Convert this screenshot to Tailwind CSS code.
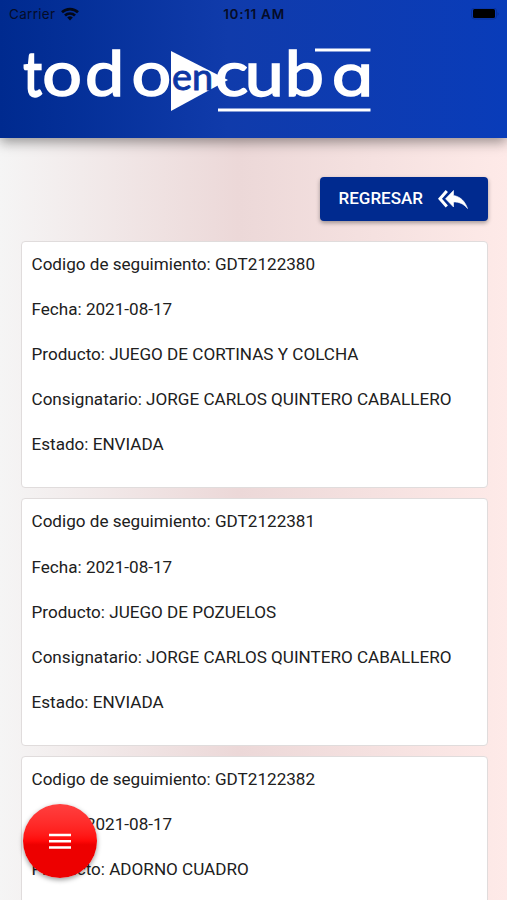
<!DOCTYPE html>
<html lang="es">
<head>
  <meta charset="UTF-8" />
  <meta name="viewport" content="width=device-width, initial-scale=1.0" />
  <title>Todo en Cuba</title>
  <script src="https://cdn.jsdelivr.net/npm/@tailwindcss/browser@4"></script>
</head>
<body class="h-[900px] overflow-hidden font-['Roboto',sans-serif] text-[17.1px] text-[#202020]">
  <div class="relative h-[900px] overflow-hidden bg-linear-to-r from-[#f5f5f5] via-[#ecd8d8] via-47% to-[#feeae8]">

    <header class="relative h-[137.5px] bg-linear-to-r from-[#002a8f] via-[#103bab] via-45% to-[#093cb9] shadow-[0_4px_12px_rgba(0,0,0,0.4)]">
      <!-- Status bar -->
      <div class="grid h-7 grid-cols-3 items-center pr-2 pl-[9px] font-['Inter',sans-serif] text-[13.5px] text-[#050c28]">
        <div class="flex items-center gap-1.5">
          <span class="tracking-[0.3px]">Carrier</span>
          <svg class="h-[14px] w-[18px]" viewBox="0 0 18 14" fill="none" stroke="#030818" stroke-width="2.7">
            <path d="M1 5.3a11.5 11.5 0 0 1 16 0" />
            <path d="M4 8.5a7.2 7.2 0 0 1 10 0" />
            <path d="M6.2 10.6a4 4 0 0 1 5.6 0L9 13.6z" fill="#030818" stroke="none" />
          </svg>
        </div>
        <span class="text-center font-semibold tracking-[0.7px]">10:11 AM</span>
        <svg class="h-3 w-7 justify-self-end" viewBox="0 0 28 12">
          <rect x="0.5" y="0" width="25" height="11" rx="3" fill="none" stroke="#08309a" />
          <rect x="2" y="1" width="22" height="9" rx="1.5" fill="#000" />
          <path d="M26.5 4v4l1.5-2z" fill="#08309a" />
        </svg>
      </div>
      <!-- Logo -->
      <svg class="h-[90px] w-full font-['Lato',sans-serif]" viewBox="0 28 507 90">
        <g fill="#fff" font-size="62">
          <g stroke="#fff" stroke-width="1.6">
            <text transform="translate(23.5 96) scale(0.82 1)" stroke-width="2.4">t</text>
            <g transform="scale(1.13 1)">
              <text x="37.3 75.3 116.3" y="96">odo</text>
              <text x="190 216.5 252" y="96">cub</text>
            </g>
            <text transform="translate(331.5 96) scale(1.2 1)" font-size="57" class="font-['Inter',sans-serif]" style="font-feature-settings: 'cv11'">a</text>
          </g>
          <path d="M171 51v60l57-31z" />
          <path d="M315 48.5h55.5v3h-55.5zM218 108.5h152.5v3h-152.5z" />
        </g>
        <text x="172" y="89.5" font-size="36" fill="#0d37a4" stroke="#0d37a4" stroke-width="0.9" textLength="41" lengthAdjust="spacingAndGlyphs">en</text>
      </svg>
    </header>

    <main class="flex flex-col pt-[39.5px] pr-[19.5px] pl-[21px]">
      <button class="flex h-[44px] w-[168px] items-center gap-[15px] self-end rounded-[4px] bg-[#002a8f] pl-[19px] text-[17px] font-medium text-white shadow-[0_2px_4px_rgba(0,0,0,0.35)]">
        <span>REGRESAR</span>
        <svg class="h-[20px] w-[30px]" viewBox="0 0 30 20" fill="#fff">
          <path d="M15.5 1.5v5C22 7.5 27 12 29.5 19.5c-4-5-8.5-6.500-14-6.500v5L7.5 9.8z" stroke="#fff" stroke-width="0.6" />
          <path d="M8.8 2L2 9.8 8.8 17.5" fill="none" stroke="#fff" stroke-width="3" />
        </svg>
      </button>

      <div id="lista" class="mt-[19.5px] flex flex-col gap-[10px]"></div>
    </main>

    <button aria-label="Menu" class="absolute top-[804px] left-[23px] flex size-[74px] items-center justify-center rounded-full bg-linear-to-b from-[#ff3f3f] from-0% via-[#ff0808] via-50% to-[#ed0000] to-55% shadow-[0_2px_5px_rgba(0,0,0,0.4)]">
      <svg class="h-4 w-[22px]" viewBox="0 0 22 16" stroke="#fff" stroke-width="2.5">
        <path d="M0 2h22M0 8.3h22M0 14.5h22" />
      </svg>
    </button>
  </div>

  <script>
    const envios = [
      { codigo: "GDT2122380", producto: "JUEGO DE CORTINAS Y COLCHA" },
      { codigo: "GDT2122381", producto: "JUEGO DE POZUELOS" },
      { codigo: "GDT2122382", producto: "ADORNO CUADRO" }
    ];

    document.getElementById("lista").innerHTML = envios.map(e => `
      <section class="flex h-[247.7px] shrink-0 flex-col gap-[25.2px] rounded-[4px] border border-[#e0dcdc] bg-white px-[9.5px] pt-[12.2px] leading-5 whitespace-nowrap">
        <p>Codigo de seguimiento: ${e.codigo}</p>
        <p>Fecha: 2021-08-17</p>
        <p>Producto: ${e.producto}</p>
        <p>Consignatario: JORGE CARLOS QUINTERO CABALLERO</p>
        <p>Estado: ENVIADA</p>
      </section>`).join("");
  </script>
</body>
</html>
